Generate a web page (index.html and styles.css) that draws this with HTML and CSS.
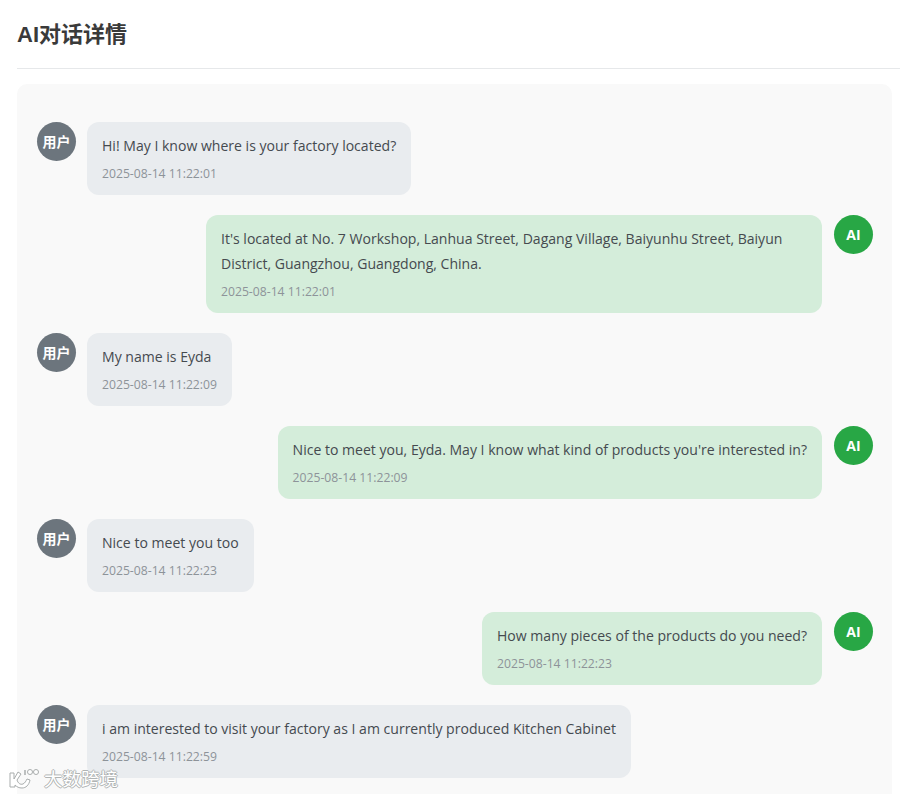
FILE: index.html
```html
<!DOCTYPE html>
<html lang="zh">
<head>
    <meta charset="UTF-8">
    <title>AI对话详情</title>
    <link rel="stylesheet" href="styles.css">
</head>
<body>
    <header class="page-head">
        <h1>AI对话详情</h1>
    </header>
    <div class="chat-panel">
        <div class="msg">
            <div class="avatar avatar-user">用户</div>
            <div class="bubble bubble-user">
                <div class="msg-text">Hi! May I know where is your factory located?</div>
                <div class="msg-time">2025-08-14 11:22:01</div>
            </div>
        </div>
        <div class="msg msg-ai">
            <div class="bubble bubble-ai">
                <div class="msg-text">It's located at No. 7 Workshop, Lanhua Street, Dagang Village, Baiyunhu Street, Baiyun District, Guangzhou, Guangdong, China.</div>
                <div class="msg-time">2025-08-14 11:22:01</div>
            </div>
            <div class="avatar avatar-ai">AI</div>
        </div>
        <div class="msg">
            <div class="avatar avatar-user">用户</div>
            <div class="bubble bubble-user">
                <div class="msg-text">My name is Eyda</div>
                <div class="msg-time">2025-08-14 11:22:09</div>
            </div>
        </div>
        <div class="msg msg-ai">
            <div class="bubble bubble-ai">
                <div class="msg-text">Nice to meet you, Eyda. May I know what kind of products you're interested in?</div>
                <div class="msg-time">2025-08-14 11:22:09</div>
            </div>
            <div class="avatar avatar-ai">AI</div>
        </div>
        <div class="msg">
            <div class="avatar avatar-user">用户</div>
            <div class="bubble bubble-user">
                <div class="msg-text">Nice to meet you too</div>
                <div class="msg-time">2025-08-14 11:22:23</div>
            </div>
        </div>
        <div class="msg msg-ai">
            <div class="bubble bubble-ai">
                <div class="msg-text">How many pieces of the products do you need?</div>
                <div class="msg-time">2025-08-14 11:22:23</div>
            </div>
            <div class="avatar avatar-ai">AI</div>
        </div>
        <div class="msg">
            <div class="avatar avatar-user">用户</div>
            <div class="bubble bubble-user">
                <div class="msg-text">i am interested to visit your factory as I am currently produced Kitchen Cabinet</div>
                <div class="msg-time">2025-08-14 11:22:59</div>
            </div>
        </div>
    </div>
    <div class="watermark">
        <svg class="watermark-logo" width="34" height="24" viewBox="0 0 34 24">
            <path d="M3 7h4v6l4-7 3 2-4 6c1 3 3 5 6 4 2-1 3-3 4-5l3 1c-1 5-4 8-8 8-3 0-5-1-7-3v2H3z" fill="#fff" stroke="#a9adad" stroke-width="1"/>
            <path d="M18 4v5" fill="none" stroke="#a9adad" stroke-width="1.500"/>
            <circle cx="23" cy="6" r="2.500" fill="#fff" stroke="#a9adad"/>
            <circle cx="29" cy="6" r="2.500" fill="#fff" stroke="#a9adad"/>
        </svg>
        <span class="watermark-text">大数跨境</span>
    </div>
</body>
</html>
```

FILE: styles.css
```css
html, body { height: 794px; overflow: hidden; }
body { margin: 0; padding: 0 0 0 17px; font-family: "Open Sans", "Noto Sans CJK SC", sans-serif; background-color: #fff; color: #333; }
.page-head { height: 64px; padding-bottom: 4px; display: flex; align-items: center; border-bottom: 1px solid #e6e8ea; }
h1 { margin: 0; font-size: 22px; font-weight: 700; color: #3a3a3a; font-family: "Liberation Sans", "Noto Sans CJK SC", sans-serif; }
.chat-panel { width: 875px; margin-top: 15px; padding: 38px 19px 40px 20px; box-sizing: border-box; background-color: #f9f9f9; border-radius: 10px; display: flex; flex-direction: column; gap: 20px; }
.msg { display: flex; align-items: flex-start; gap: 11px; }
.msg-ai { justify-content: flex-end; gap: 12px; }
.avatar { width: 39px; height: 39px; flex-shrink: 0; padding-bottom: 1px; box-sizing: border-box; border-radius: 50%; display: flex; align-items: center; justify-content: center; color: #fff; font-size: 14px; font-weight: 700; }
.avatar-user { background-color: #6c757d; }
.avatar-ai { background-color: #28a745; }
.bubble { padding: 11px 15px 13px; border-radius: 12px; max-width: 616px; box-sizing: border-box; }
.bubble-user { background-color: #e9ecef; }
.bubble-ai { background-color: #d4edda; }
.msg-text { font-size: 14.050px; line-height: 25px; color: #454a4f; }
.msg-time { font-size: 12.200px; line-height: 16px; margin-top: 8px; color: #8d9399; }
.watermark { position: absolute; left: 7px; top: 765px; display: flex; align-items: center; gap: 3px; }
.watermark-text { font-size: 18.500px; color: #fff; text-shadow: 1px 0 0 #b0b4b4, -1px 0 0 #b0b4b4, 0 1px 0 #b0b4b4, 0 -1px 0 #b0b4b4; font-family: "Noto Sans CJK SC", sans-serif; }
```
